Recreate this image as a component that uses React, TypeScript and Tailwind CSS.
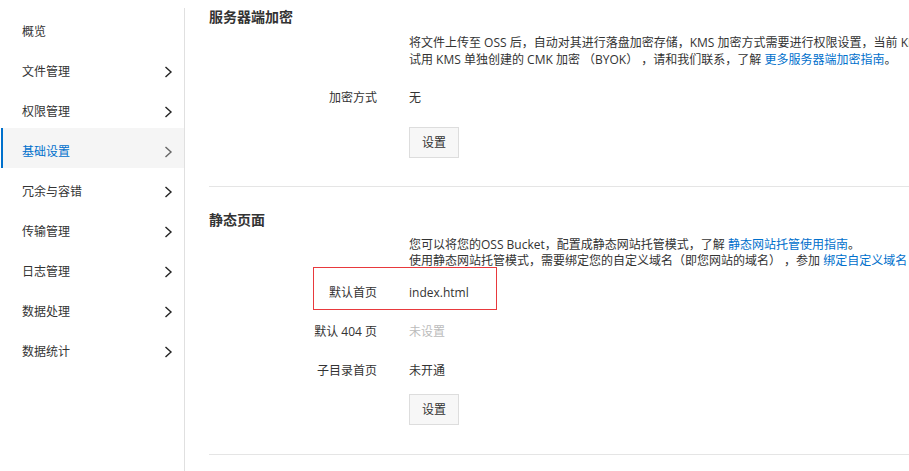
import React from "react";

const menus = [
  { name: "概览", arrow: false },
  { name: "文件管理", arrow: true },
  { name: "权限管理", arrow: true },
  { name: "基础设置", arrow: true, active: true },
  { name: "冗余与容错", arrow: true },
  { name: "传输管理", arrow: true },
  { name: "日志管理", arrow: true },
  { name: "数据处理", arrow: true },
  { name: "数据统计", arrow: true },
];

const Chevron = ({ active }: { active?: boolean }) => (
  <svg width="9" height="12" viewBox="0 0 9 12" fill="none">
    <path
      d="M1.5 1 L7 6 L1.5 11"
      stroke={active ? "#666" : "#222"}
      strokeWidth="1.4"
    />
  </svg>
);

const Row = ({
  label,
  children,
  overlay,
}: {
  label: string;
  children: React.ReactNode;
  overlay?: boolean;
}) => (
  <div className="relative flex items-center h-[39px]">
    <div className="w-[168px] text-right text-[#333]">{label}</div>
    <div className="ml-8">{children}</div>
    {overlay && (
      <div className="absolute left-[104px] top-[-6px] w-[184px] h-[43px] border border-[#e8393d]" />
    )}
  </div>
);

const Button = () => (
  <div className="ml-[200px] w-[50px] h-[31px] flex items-center justify-center border border-[#ddd] bg-[#f7f7f7] text-[#333]">
    设置
  </div>
);

export default function App() {
  return (
    <div
      className="flex w-[909px] h-[471px] bg-white overflow-hidden text-[12px] text-[#333]"
      style={{ fontFamily: '"Open Sans", "Noto Sans CJK SC", sans-serif' }}
    >
      <div className="w-[185px] shrink-0 pt-2">
        <div className="h-full border-r border-[#e0e0e0] pl-[1px]">
          {menus.map((m) => (
            <div
              key={m.name}
              className={
                "h-10 pt-2 flex items-center justify-between pl-[19px] pr-[11px] border-l-2 " +
                (m.active
                  ? "border-[#0070cc] bg-[#f5f5f5] text-[#0070cc]"
                  : "border-transparent text-[#333]")
              }
            >
              <span>{m.name}</span>
              {m.arrow && <Chevron active={m.active} />}
            </div>
          ))}
        </div>
      </div>

      <div className="flex-1 min-w-0 pl-6 overflow-hidden">
        <div className="pb-[28px] border-b border-[#e5e5e5]">
          <div className="h-[34px] leading-[34px] text-[14px] font-bold text-[#333]">
            服务器端加密
          </div>
          <div className="ml-[200px] leading-[17px] whitespace-nowrap">
            <div>
              将文件上传至 OSS 后，自动对其进行落盘加密存储，KMS 加密方式需要进行权限设置，当前 KMS 仅支持使用默认的服务主密钥
            </div>
            <div>
              试用 KMS 单独创建的 CMK 加密 （BYOK） ，请和我们联系，了解{" "}
              <span className="text-[#0070cc]">更多服务器端加密指南</span>。
            </div>
          </div>
          <div className="mt-[10px]">
            <Row label="加密方式">无</Row>
          </div>
          <div className="mt-[10px]">
            <Button />
          </div>
        </div>

        <div className="pt-4 pb-[29px] border-b border-[#e5e5e5]">
          <div className="h-[34px] leading-[34px] text-[14px] font-bold text-[#333]">
            静态页面
          </div>
          <div className="ml-[200px] leading-[16px] whitespace-nowrap">
            <div>
              您可以将您的OSS Bucket，配置成静态网站托管模式，了解{" "}
              <span className="text-[#0070cc]">静态网站托管使用指南</span>。
            </div>
            <div>
              使用静态网站托管模式，需要绑定您的自定义域名（即您网站的域名） ，参加{" "}
              <span className="text-[#0070cc]">绑定自定义域名</span>
            </div>
          </div>
          <div className="mt-1">
            <Row label="默认首页" overlay>
              index.html
            </Row>
            <Row label="默认 404 页">
              <span className="text-[#bbb]">未设置</span>
            </Row>
            <Row label="子目录首页">未开通</Row>
          </div>
          <div className="mt-1">
            <Button />
          </div>
        </div>
      </div>
    </div>
  );
}
